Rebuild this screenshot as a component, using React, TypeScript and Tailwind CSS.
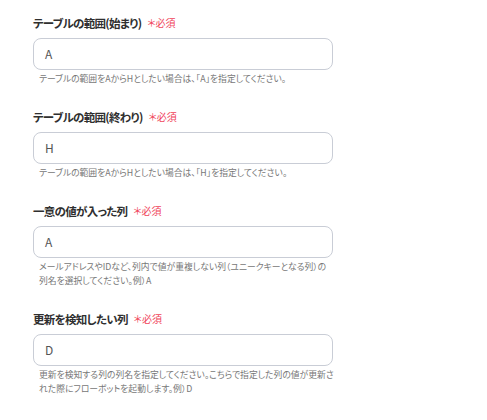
const fields = [
  {
    label: "テーブルの範囲(始まり)",
    value: "A",
    help: "テーブルの範囲をAからHとしたい場合は、「A」を指定してください。",
    helpWidth: "w-[306px]",
  },
  {
    label: "テーブルの範囲(終わり)",
    value: "H",
    help: "テーブルの範囲をAからHとしたい場合は、「H」を指定してください。",
    helpWidth: "w-[306px]",
  },
  {
    label: "一意の値が入った列",
    value: "A",
    help: "メールアドレスやIDなど、列内で値が重複しない列（ユニークキーとなる列）の列名を選択してください。例）A",
    helpWidth: "w-[299px]",
  },
  {
    label: "更新を検知したい列",
    value: "D",
    help: "更新を検知する列の列名を指定してください。こちらで指定した列の値が更新された際にフローボットを起動します。例）D",
    helpWidth: "w-[306px]",
  },
];

export default function App() {
  return (
    <div className="min-h-[420px] w-[487px] bg-white pl-[33px] pt-[15px] font-['Noto_Sans_CJK_JP','Noto_Sans',sans-serif] [font-feature-settings:'palt']">
      <div className="flex w-[300px] flex-col gap-[23px]">
        {fields.map((f) => (
          <div key={f.label} className="flex flex-col">
            <div className="flex h-[16px] items-center gap-[6px] leading-[16px]">
              <span className="text-[11.5px] font-bold tracking-[-0.7px] text-[#2f2f2f]">{f.label}</span>
              <span className="text-[10px] text-[#f0445a]">＊必須</span>
            </div>
            <div className="mt-[7px] flex h-[32px] items-center rounded-[8px] border border-[#c9cdd6] px-[11px] text-[12px] text-[#555]">
              {f.value}
            </div>
            <p className={`mt-[2px] pl-[6px] text-[8.8px] leading-[14px] text-[#777] ${f.helpWidth}`}>{f.help}</p>
          </div>
        ))}
      </div>
    </div>
  );
}
